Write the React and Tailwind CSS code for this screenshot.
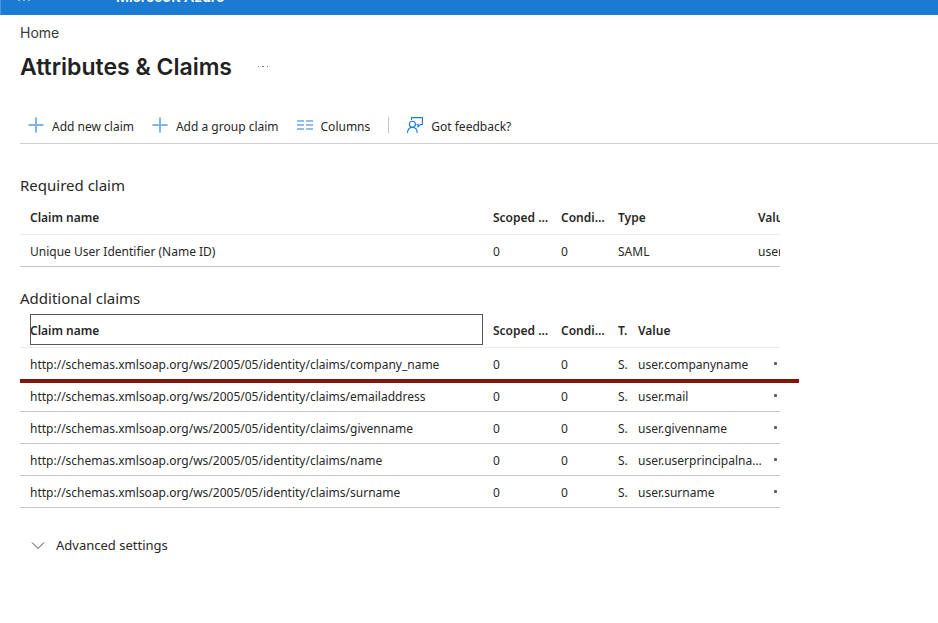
import React from "react";

const requiredClaims = [
  { name: "Unique User Identifier (Name ID)", scoped: 0, conditional: 0, type: "SAML", value: "user.userprincipalname" },
];

const prefix = "http://schemas.xmlsoap.org/ws/2005/05/identity/claims/";
const additionalClaims = [
  { name: "company_name", value: "user.companyname" },
  { name: "emailaddress", value: "user.mail" },
  { name: "givenname", value: "user.givenname" },
  { name: "name", value: "user.userprincipalname" },
  { name: "surname", value: "user.surname" },
];

function PlusIcon() {
  return (
    <svg className="size-4" viewBox="0 0 16 16" fill="none" stroke="#7db4ea" aria-hidden="true">
      <path d="M8 0.5V15.5M0.5 8H15.5" strokeWidth="2" />
    </svg>
  );
}

function ColumnsIcon() {
  return (
    <svg className="size-4" viewBox="0 0 16 16" fill="none" stroke="#8fbdec" aria-hidden="true">
      <path d="M0 4H7M9 4H16M0 8H7M9 8H16M0 12H7M9 12H16" strokeWidth="2" />
    </svg>
  );
}

function FeedbackIcon() {
  return (
    <svg className="size-4" viewBox="0 0 16 16" fill="none" stroke="#1b7cd6" strokeWidth="1.1" aria-hidden="true">
      <path d="M4.5 3V0.6H15.4V7.5H13.4L11 9.8V7.5H9.5" />
      <circle cx="5.4" cy="7.2" r="3" />
      <path d="M0.5 16C0.7 12.6 2.7 10.4 5.4 10.4S10.1 12.6 10.3 16" />
    </svg>
  );
}

function ToolButton({ icon, children }) {
  return (
    <button type="button" className="flex items-center gap-2 whitespace-nowrap">
      {icon}
      <span className="pt-1">{children}</span>
    </button>
  );
}

function Th({ children }) {
  return <th scope="col" className="truncate pt-[3px] pl-[10px] text-left font-semibold">{children}</th>;
}

function Td({ children }) {
  return <td className="truncate pt-[3px] pl-[10px]">{children}</td>;
}

export default function App() {
  return (
    <div className="min-h-screen overflow-hidden bg-white font-['Noto_Sans','Open_Sans',sans-serif] text-[12px] leading-4 text-[#292827]">
      <header className="flex h-[15px] items-end overflow-hidden border-l border-[#4b97dd] bg-[#1b7bd3] pb-2 pl-[15px] text-white">
        <span className="w-[100px] text-[14px] leading-5">
          <svg className="h-2 w-4" viewBox="0 0 16 8" fill="#8fc0ee" aria-hidden="true">
            <path d="M2 0h2v2H2zM7 0h2v2H7zM12 0h2v2h-2z" />
          </svg>
        </span>
        <span className="font-['Inter',sans-serif] text-[14px] leading-5 font-semibold">Microsoft Azure</span>
      </header>

      <main className="pt-2 pl-5">
        <nav aria-label="Breadcrumb" className="font-['Inter',sans-serif] text-[14px] leading-5 text-[#3b3a39]">
          <a href="#home">Home</a>
        </nav>
        <div className="mt-2 flex items-center gap-6">
          <h1 className="font-['Inter',sans-serif] text-[23px] leading-8 font-semibold text-[#222]">Attributes &amp; Claims</h1>
          <button type="button" aria-label="More options" className="text-[#777]">
            <svg className="h-4 w-4" viewBox="0 0 16 16" fill="currentColor" aria-hidden="true">
              <path d="M2 7h1v1H2zM6 7h2v1H6zM11 7h1v1h-1z" />
            </svg>
          </button>
        </div>

        <div role="toolbar" aria-label="Claim actions" className="mt-6 flex h-[37px] items-center gap-[18px] border-b border-[#d2d0ce] pl-2">
          <ToolButton icon={<PlusIcon />}>Add new claim</ToolButton>
          <ToolButton icon={<PlusIcon />}>Add a group claim</ToolButton>
          <ToolButton icon={<ColumnsIcon />}>Columns</ToolButton>
          <span className="h-4 w-px bg-[#c8c6c4]" />
          <ToolButton icon={<FeedbackIcon />}>Got feedback?</ToolButton>
        </div>

        <section className="max-w-[760px] overflow-hidden pt-[31px]">
          <h2 className="text-[15px] leading-5">Required claim</h2>
          <table className="mt-1 w-[860px] table-fixed border-collapse">
            <colgroup>
              <col className="w-[463px]" />
              <col className="w-[68px]" />
              <col className="w-[57px]" />
              <col className="w-[140px]" />
              <col />
            </colgroup>
            <thead>
              <tr className="h-[35px] border-b border-[#edebe9]">
                <Th>Claim name</Th>
                <Th>Scoped Groups</Th>
                <Th>Conditions</Th>
                <Th>Type</Th>
                <Th>Value</Th>
              </tr>
            </thead>
            <tbody>
              {requiredClaims.map((c) => (
                <tr key={c.name} className="h-8 border-b border-[#c8c6c4]">
                  <Td>{c.name}</Td>
                  <Td>{c.scoped}</Td>
                  <Td>{c.conditional}</Td>
                  <Td>{c.type}</Td>
                  <Td>{c.value}</Td>
                </tr>
              ))}
            </tbody>
          </table>
        </section>

        <section className="max-w-[760px] pt-[21px]">
          <h2 className="text-[15px] leading-5">Additional claims</h2>
          <div className="relative mt-[5px]">
            <table className="w-full table-fixed border-collapse">
              <colgroup>
                <col className="w-[463px]" />
                <col className="w-[68px]" />
                <col className="w-[57px]" />
                <col className="w-[20px]" />
                <col />
                <col className="w-[17px]" />
              </colgroup>
              <thead>
                <tr className="h-[35px] border-b border-[#edebe9]">
                  <th scope="col" className="pl-[10px] text-left font-semibold">
                    <button type="button" className="block h-[31px] w-full pt-[2px] text-left font-semibold outline-1 -outline-offset-1 outline-[#555]">Claim name</button>
                  </th>
                  <Th>Scoped Groups</Th>
                  <Th>Conditions</Th>
                  <th scope="col" className="pt-[3px] pl-[10px] text-left font-semibold">T.</th>
                  <Th>Value</Th>
                  <td />
                </tr>
              </thead>
              <tbody>
                {additionalClaims.map((c) => (
                  <tr key={c.name} className="h-8 border-b border-[#c8c6c4]">
                    <Td>{prefix + c.name}</Td>
                    <Td>0</Td>
                    <Td>0</Td>
                    <td className="pt-[3px] pl-[10px]">S.</td>
                    <Td>{c.value}</Td>
                    <td>
                      <button type="button" aria-label="Row options" className="mr-[3px] ml-auto block size-[3px] rounded-[1px] bg-[#605e5c]" />
                    </td>
                  </tr>
                ))}
              </tbody>
            </table>
            <span className="absolute top-[66px] -right-[19px] left-0 h-1 bg-[#82140c]" />
          </div>
        </section>

        <button type="button" className="mt-[27px] ml-[10px] flex items-center gap-[10px] text-[13px] leading-5">
          <svg className="size-4" viewBox="0 0 16 16" fill="none" stroke="#444" aria-hidden="true">
            <path d="M2 5.5L8 11.5L14 5.5" />
          </svg>
          <span>Advanced settings</span>
        </button>
      </main>
    </div>
  );
}
